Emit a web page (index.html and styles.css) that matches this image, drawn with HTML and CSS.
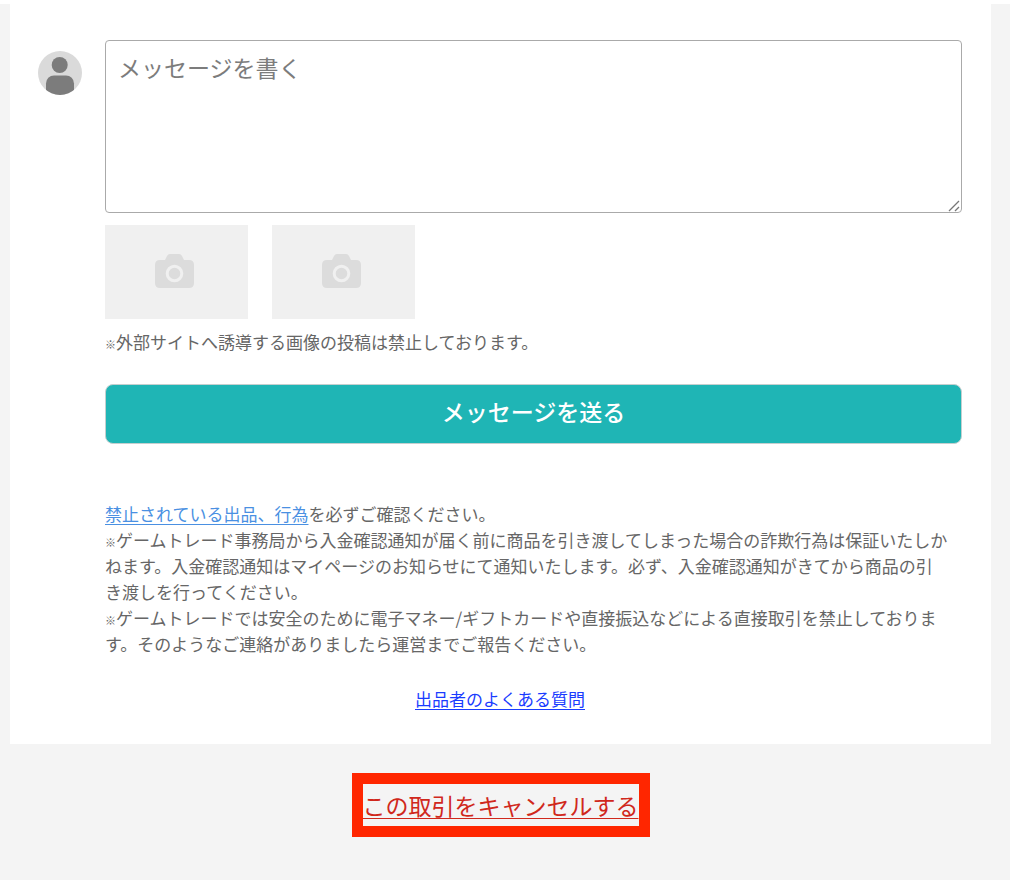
FILE: index.html
```html
<!DOCTYPE html>
<html lang="ja">
<head>
<meta charset="utf-8">
<meta name="viewport" content="width=device-width, initial-scale=1">
<title>取引メッセージ</title>
<link rel="stylesheet" href="styles.css">
</head>
<body>
<div class="page">
  <main class="card">
    <div class="compose">
      <svg class="avatar" viewBox="0 0 44 44" aria-hidden="true">
        <defs><clipPath id="avatar-clip"><circle cx="22" cy="22" r="22"/></clipPath></defs>
        <g clip-path="url(#avatar-clip)">
          <rect width="44" height="44" fill="#dadada"/>
          <circle cx="21.700" cy="14" r="8" fill="#7c7c7c"/>
          <rect x="8" y="24.500" width="28" height="28" rx="8" fill="#7c7c7c"/>
        </g>
      </svg>
      <form class="form">
        <div class="message-box">
          <textarea class="message" placeholder="メッセージを書く" aria-label="メッセージを書く"></textarea>
          <svg class="grip" viewBox="0 0 12 12" aria-hidden="true"><path d="M1 11 11 1M7 11l4-4" fill="none" stroke="#777" stroke-width="1.300"/></svg>
        </div>
        <div class="photos">
          <button class="photo" type="button" aria-label="画像1を追加">
            <svg class="camera" viewBox="0 0 39 34" aria-hidden="true">
              <path fill="#dcdcdc" d="M5 6h5l2-4q1-2 3-2h9q2 0 3 2l2 4h5q5 0 5 5v18q0 5-5 5H5q-5 0-5-5V11q0-5 5-5z"/>
              <circle cx="19.500" cy="19.500" r="7.300" fill="none" stroke="#f0f0f0" stroke-width="3"/>
            </svg>
          </button>
          <button class="photo" type="button" aria-label="画像2を追加">
            <svg class="camera" viewBox="0 0 39 34" aria-hidden="true">
              <path fill="#dcdcdc" d="M5 6h5l2-4q1-2 3-2h9q2 0 3 2l2 4h5q5 0 5 5v18q0 5-5 5H5q-5 0-5-5V11q0-5 5-5z"/>
              <circle cx="19.500" cy="19.500" r="7.300" fill="none" stroke="#f0f0f0" stroke-width="3"/>
            </svg>
          </button>
        </div>
        <p class="note"><span class="mark">※</span>外部サイトへ誘導する画像の投稿は禁止しております。</p>
        <button class="send" type="submit">メッセージを送る</button>
        <div class="rules">
          <p class="rule"><a class="rule-link" href="#rules">禁止されている出品、行為</a>を必ずご確認ください。</p>
          <p class="rule"><span class="mark">※</span>ゲームトレード事務局から入金確認通知が届く前に商品を引き渡してしまった場合の詐欺行為は保証いたしかねます。入金確認通知はマイページのお知らせにて通知いたします。必ず、入金確認通知がきてから商品の引<br>き渡しを行ってください。</p>
          <p class="rule"><span class="mark">※</span>ゲームトレードでは安全のために電子マネー/ギフトカードや直接振込などによる直接取引を禁止しております。そのようなご連絡がありましたら運営までご報告ください。</p>
        </div>
      </form>
    </div>
    <p class="faq"><a class="faq-link" href="#faq">出品者のよくある質問</a></p>
  </main>
  <div class="cancel">
    <div class="cancel-frame"><a class="cancel-link" href="#cancel">この取引をキャンセルする</a></div>
  </div>
</div>
</body>
</html>
```
FILE: styles.css
```css
* {
  box-sizing: border-box;
}

body {
  margin: 0;
  padding: 4px 10px 8px 0;
  background: #fff;
  color: #666;
  font-family: "Noto Sans CJK JP", sans-serif;
  font-size: 17px;
  line-height: 26px;
}

p {
  margin: 0;
}

a {
  text-underline-offset: 3px;
}

button,
textarea {
  font: inherit;
}

.page {
  min-height: calc(100vh - 12px);
  padding: 0 19px 42px 10px;
  background: #f4f4f4;
}

.card {
  padding: 36px 29px 32px 28px;
  background: #fff;
}

.compose {
  display: flex;
  align-items: flex-start;
  gap: 23px;
}

.avatar {
  flex: none;
  width: 44px;
  height: 44px;
  margin-top: 11px;
}

.form {
  flex: 1;
  min-width: 0;
}

.message-box {
  position: relative;
}

.message {
  display: block;
  width: 100%;
  height: 173px;
  padding: 9px 12px;
  border: 1px solid #aaa;
  border-radius: 4px;
  background: #fff;
  color: #444;
  font-size: 23px;
  line-height: 34px;
  resize: vertical;
}

.message::placeholder {
  color: #7c7c7c;
}

.message::-webkit-resizer {
  background: transparent;
}

.grip {
  position: absolute;
  right: 2px;
  bottom: 1px;
  width: 12px;
  height: 12px;
  pointer-events: none;
}

.photos {
  display: flex;
  gap: 24px;
  margin-top: 12px;
}

.photo {
  display: flex;
  align-items: center;
  justify-content: center;
  width: 143px;
  height: 94px;
  padding: 0 4px 2px 0;
  border: 0;
  background: #f0f0f0;
}

.camera {
  width: 39px;
  height: 34px;
}

.note {
  margin-top: 10px;
}

.mark {
  font-size: 11px;
  font-weight: 700;
  line-height: 1;
}

.send {
  display: block;
  width: 100%;
  height: 60px;
  margin-top: 29px;
  padding: 0 0 6px;
  border: 1px solid #c4cfcf;
  border-radius: 8px;
  background: #1fb5b5;
  color: #fff;
  font-size: 23px;
  font-weight: 500;
}

.rules {
  margin-top: 57px;
  padding-right: 12px;
}

.rule-link {
  color: #4a90e2;
}

.faq {
  margin-top: 29px;
  text-align: center;
}

.faq-link {
  color: #1a3cff;
}

.cancel {
  display: flex;
  justify-content: center;
  padding-top: 29px;
}

.cancel-frame {
  border: 11px solid #ff2600;
  font-size: 23px;
  line-height: 42px;
}

.cancel-link {
  color: #d0281c;
  text-decoration-thickness: 1px;
}
```
